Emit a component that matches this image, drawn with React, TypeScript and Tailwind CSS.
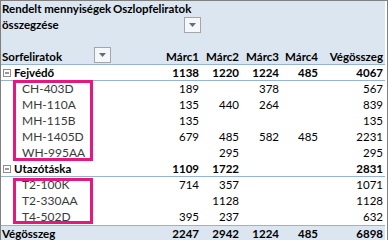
import React from "react";

type Row = { label: string; vals: (number | null)[]; total: number };

const groups: { name: string; sum: (number | null)[]; total: number; items: Row[] }[] = [
  {
    name: "Fejvédő",
    sum: [1138, 1220, 1224, 485],
    total: 4067,
    items: [
      { label: "CH-403D", vals: [189, null, 378, null], total: 567 },
      { label: "MH-110A", vals: [135, 440, 264, null], total: 839 },
      { label: "MH-115B", vals: [135, null, null, null], total: 135 },
      { label: "MH-1405D", vals: [679, 485, 582, 485], total: 2231 },
      { label: "WH-995AA", vals: [null, 295, null, null], total: 295 },
    ],
  },
  {
    name: "Utazótáska",
    sum: [1109, 1722, null, null],
    total: 2831,
    items: [
      { label: "T2-100K", vals: [714, 357, null, null], total: 1071 },
      { label: "T2-330AA", vals: [null, 1128, null, null], total: 1128 },
      { label: "T4-502D", vals: [395, 237, null, null], total: 632 },
    ],
  },
];

const cols = "grid grid-cols-[112px_89px_40px_40px_39px_64px]";

function Caret() {
  return (
    <span className="flex h-[16px] w-[17px] items-center justify-center border border-[#a6a6a6] bg-[#f4f7fb]">
      <svg width="7" height="4" viewBox="0 0 7 4">
        <path d="M0 0h7L3.5 4z" fill="#6b6b6b" />
      </svg>
    </span>
  );
}

function Minus() {
  return (
    <svg width="8" height="8" viewBox="0 0 8 8" className="mr-[3px] shrink-0">
      <rect x="0.5" y="0.5" width="7" height="7" fill="#fff" stroke="#8e8e8e" />
      <path d="M2 4h4" stroke="#333" strokeWidth="1" />
    </svg>
  );
}

function Nums({ vals, total }: { vals: (number | null)[]; total: number }) {
  return (
    <>
      {vals.map((v, i) => (
        <span key={i} className="pr-[3px] text-right">
          {v ?? ""}
        </span>
      ))}
      <span className="pr-[2px] text-right">{total}</span>
    </>
  );
}

export default function App() {
  return (
    <div
      className="relative h-[240px] w-[388px] overflow-hidden border-l border-r border-t border-[#808080] bg-white text-[11.5px] text-black"
      style={{ fontFamily: "Lato, 'Liberation Sans', sans-serif" }}
    >
      <div className="w-[384px]">
        {/* pivot header */}
        <div className="border-b border-[#95b3d7] bg-[#dce6f1] font-bold">
          <div className={`${cols} h-[32px] leading-[16px]`}>
            <span className="whitespace-nowrap pl-[1px]">
              Rendelt mennyiségek
              <br />
              összegzése
            </span>
            <div className="flex flex-col">
              <span>Oszlopfeliratok</span>
              <div className="flex justify-end pr-[1px]">
                <Caret />
              </div>
            </div>
          </div>
          <div className="h-[16px]" />
          <div className={`${cols} h-[15px] items-center leading-[15px]`}>
            <div className="flex items-center justify-between pl-[1px] pr-[2px]">
              <span>Sorfeliratok</span>
              <div className="-mt-[3px]">
                <Caret />
              </div>
            </div>
            <span className="pr-[3px] text-right">Márc1</span>
            <span className="pr-[3px] text-right">Márc2</span>
            <span className="pr-[3px] text-right">Márc3</span>
            <span className="pr-[3px] text-right">Márc4</span>
            <span className="pr-[2px] text-right">Végösszeg</span>
          </div>
        </div>

        {/* row groups */}
        {groups.map((g) => (
          <div key={g.name}>
            <div className={`${cols} h-[16px] items-center border-b border-[#95b3d7] font-bold leading-[15px]`}>
              <span className="flex items-center pl-[2px]">
                <Minus />
                {g.name}
              </span>
              <Nums vals={g.sum} total={g.total} />
            </div>
            {g.items.map((r) => (
              <div key={r.label} className={`${cols} h-[16px] items-center leading-[16px]`}>
                <span className="pl-[21px] text-[12px] text-[#3a3a3a]">{r.label}</span>
                <Nums vals={r.vals} total={r.total} />
              </div>
            ))}
          </div>
        ))}

        {/* grand total */}
        <div className={`${cols} h-[16px] items-center border-t border-[#95b3d7] bg-[#dce6f1] font-bold leading-[15px]`}>
          <span className="pl-[1px]">Végösszeg</span>
          <Nums vals={[2247, 2942, 1224, 485]} total={6898} />
        </div>
      </div>

      {/* highlight frames */}
      <div className="absolute left-[12px] top-[79px] h-[81px] w-[80px] border-[3px] border-[#e6187f]" />
      <div className="absolute left-[12px] top-[177px] h-[46px] w-[80px] border-[3px] border-[#e6187f]" />
    </div>
  );
}
